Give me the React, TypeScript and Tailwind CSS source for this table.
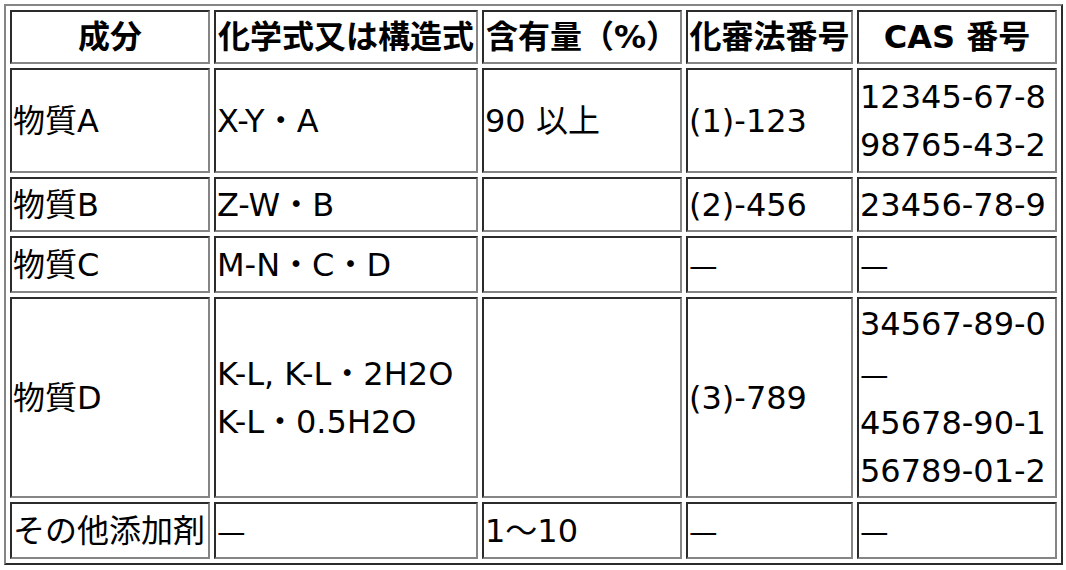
const cell =
  "border-2 border-t-[#2b2b2b] border-l-[#2b2b2b] border-r-[#858585] border-b-[#858585] px-[1px] py-[1px] align-middle";

function Dash() {
  return <span className="font-['Noto_Sans_CJK_JP',sans-serif]">—</span>;
}

export default function App() {
  return (
    <div className="min-h-screen bg-white pl-[4px] pt-[4px] text-black font-['DejaVu_Sans','Noto_Sans_CJK_JP',sans-serif] text-[32px] leading-[48px]">
      <table className="table-fixed w-[1059px] border-separate border-spacing-[4px] border-2 border-t-[#858585] border-l-[#858585] border-r-[#2b2b2b] border-b-[#2b2b2b]">
        <tbody>
          <tr className="h-[54px] font-bold text-center">
            <td className={`${cell} w-[200px]`}>成分</td>
            <td className={`${cell} w-[264px]`}>化学式又は構造式</td>
            <td className={`${cell} w-[200px]`}>含有量（%）</td>
            <td className={`${cell} w-[167px]`}>化審法番号</td>
            <td className={`${cell} w-[200px]`}>CAS 番号</td>
          </tr>
          <tr className="h-[105px]">
            <td className={cell}>物質A</td>
            <td className={cell}>X-Y・A</td>
            <td className={cell}>90 以上</td>
            <td className={cell}>(1)-123</td>
            <td className={cell}>
              12345-67-8
              <br />
              98765-43-2
            </td>
          </tr>
          <tr className="h-[55px]">
            <td className={cell}>物質B</td>
            <td className={cell}>Z-W・B</td>
            <td className={cell}></td>
            <td className={cell}>(2)-456</td>
            <td className={cell}>23456-78-9</td>
          </tr>
          <tr className="h-[55px]">
            <td className={cell}>物質C</td>
            <td className={cell}>M-N・C・D</td>
            <td className={cell}></td>
            <td className={cell}>
              <Dash />
            </td>
            <td className={cell}>
              <Dash />
            </td>
          </tr>
          <tr className="h-[201px]">
            <td className={cell}>物質D</td>
            <td className={cell}>
              K-L, K-L・2H2O
              <br />
              K-L・0.5H2O
            </td>
            <td className={cell}></td>
            <td className={cell}>(3)-789</td>
            <td className={cell}>
              34567-89-0
              <br />
              <Dash />
              <br />
              45678-90-1
              <br />
              56789-01-2
            </td>
          </tr>
          <tr className="h-[56px]">
            <td className={cell}>その他添加剤</td>
            <td className={cell}>
              <Dash />
            </td>
            <td className={cell}>1〜10</td>
            <td className={cell}>
              <Dash />
            </td>
            <td className={cell}>
              <Dash />
            </td>
          </tr>
        </tbody>
      </table>
    </div>
  );
}
